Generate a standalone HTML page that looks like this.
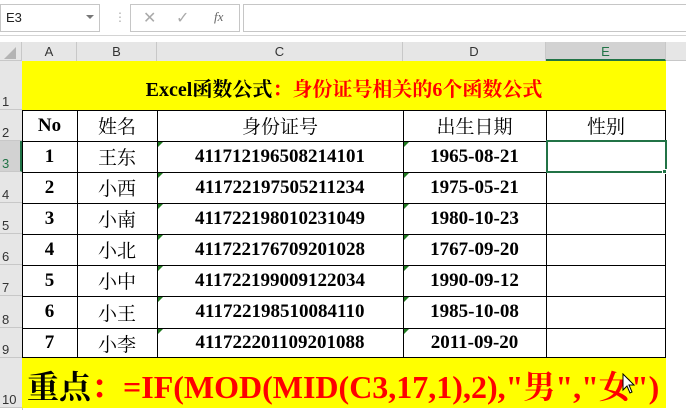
<!DOCTYPE html><html><head><meta charset="utf-8"><style>
*{margin:0;padding:0;box-sizing:border-box}
body{width:686px;height:410px;background:#fff;position:relative;overflow:hidden;font-family:"Liberation Sans",sans-serif}
.a{position:absolute}
.cell{position:absolute;display:flex;align-items:center;justify-content:center;font-family:"Liberation Serif","Noto Serif CJK SC",serif;font-weight:bold;font-size:19px;color:#000}
.rh{position:absolute;left:0;width:22px;background:#e6e6e6;border-bottom:1px solid #c8c8c8;font-size:13px;color:#333;padding-left:2px;display:flex;align-items:flex-end}
.ch{position:absolute;top:42px;height:19px;background:#e6e6e6;border-right:1px solid #c8c8c8;font-size:13px;color:#333;text-align:center;line-height:19px}
.tri{position:absolute;width:0;height:0;border-top:5px solid #207a20;border-right:5px solid transparent}
</style></head><body>
<div class="a" style="left:0;top:0;width:686px;height:36px;background:#fff;border-bottom:1px solid #d4d4d4"></div>
<div class="a" style="left:0;top:4px;width:100px;height:28px;border:1px solid #c6c6c6;font-size:13px;line-height:26px;padding-left:5px;color:#222">E3</div>
<div class="a" style="left:86px;top:15px;border-left:4px solid transparent;border-right:4px solid transparent;border-top:4px solid #777"></div>
<div class="a" style="left:114px;top:10px;color:#aaa;font-size:12px">⋮</div>
<div class="a" style="left:130px;top:4px;width:110px;height:28px;border:1px solid #c6c6c6"></div>
<div class="a" style="left:143px;top:8px;color:#aaa;font-size:16px">✕</div>
<div class="a" style="left:176px;top:8px;color:#aaa;font-size:16px">✓</div>
<div class="a" style="left:214px;top:9px;color:#666;font-size:13px;font-style:italic;font-family:'Liberation Serif',serif">fx</div>
<div class="a" style="left:243px;top:4px;width:443px;height:28px;border:1px solid #c6c6c6;border-right:none"></div>
<div class="a" style="left:0;top:42px;width:686px;height:19px;background:#e6e6e6;border-bottom:1px solid #c8c8c8"></div>
<div class="a" style="left:0;top:42px;width:22px;height:19px;border-right:1px solid #c8c8c8"></div>
<div class="a" style="left:4px;top:47px;border-left:12px solid transparent;border-bottom:12px solid #b4b4b4"></div>
<div class="ch" style="left:22px;width:55px">A</div>
<div class="ch" style="left:77px;width:80px">B</div>
<div class="ch" style="left:157px;width:246px">C</div>
<div class="ch" style="left:403px;width:143px">D</div>
<div class="ch" style="left:546px;width:120px;background:#d2d2d2;border-bottom:2px solid #217346;color:#217346">E</div>
<div class="rh" style="top:61px;height:49px">1</div>
<div class="rh" style="top:110px;height:31px">2</div>
<div class="rh" style="top:141px;height:31px;background:#d2d2d2;color:#217346;border-right:2px solid #217346">3</div>
<div class="rh" style="top:172px;height:31px">4</div>
<div class="rh" style="top:203px;height:31px">5</div>
<div class="rh" style="top:234px;height:31px">6</div>
<div class="rh" style="top:265px;height:31px">7</div>
<div class="rh" style="top:296px;height:32px">8</div>
<div class="rh" style="top:328px;height:30px">9</div>
<div class="rh" style="top:358px;height:50px">10</div>
<div class="a" style="left:22px;top:61px;width:1px;height:349px;background:#c8c8c8"></div>
<div class="a" style="left:22px;top:61px;width:644px;height:49px;background:#ff0;display:flex;align-items:center;justify-content:center;font-family:'Liberation Serif','Noto Serif CJK SC',serif;font-weight:bold;font-size:20px;padding-top:4px;white-space:nowrap"><span>Excel函数公式<span style="color:#f00">：身份证号相关的6个函数公式</span></span></div>
<div class="a" style="left:22px;top:110px;width:644px;height:248px;border:1px solid #000;border-right:none"></div>
<div class="a" style="left:665px;top:110px;width:1px;height:248px;background:#000"></div>
<div class="a" style="left:77px;top:110px;width:1px;height:248px;background:#000"></div>
<div class="a" style="left:157px;top:110px;width:1px;height:248px;background:#000"></div>
<div class="a" style="left:403px;top:110px;width:1px;height:248px;background:#000"></div>
<div class="a" style="left:546px;top:110px;width:1px;height:248px;background:#000"></div>
<div class="a" style="left:22px;top:141px;width:644px;height:1px;background:#000"></div>
<div class="a" style="left:22px;top:172px;width:644px;height:1px;background:#000"></div>
<div class="a" style="left:22px;top:203px;width:644px;height:1px;background:#000"></div>
<div class="a" style="left:22px;top:234px;width:644px;height:1px;background:#000"></div>
<div class="a" style="left:22px;top:265px;width:644px;height:1px;background:#000"></div>
<div class="a" style="left:22px;top:296px;width:644px;height:1px;background:#000"></div>
<div class="a" style="left:22px;top:328px;width:644px;height:1px;background:#000"></div>
<div class="a" style="left:22px;top:357px;width:644px;height:1px;background:#000"></div>
<div class="cell" style="left:22px;top:110px;width:55px;height:31px">No</div>
<div class="cell" style="left:77px;top:110px;width:80px;height:31px;font-weight:normal">姓名</div>
<div class="cell" style="left:157px;top:110px;width:246px;height:31px;font-weight:normal">身份证号</div>
<div class="cell" style="left:403px;top:110px;width:143px;height:31px;font-weight:normal">出生日期</div>
<div class="cell" style="left:546px;top:110px;width:120px;height:31px;font-weight:normal">性别</div>
<div class="cell" style="left:22px;top:141px;width:55px;height:31px">1</div><div class="cell" style="left:77px;top:141px;width:80px;height:31px;font-weight:normal">王东</div><div class="cell" style="left:157px;top:141px;width:246px;height:31px">411712196508214101</div><div class="cell" style="left:403px;top:141px;width:143px;height:31px">1965-08-21</div>
<div class="cell" style="left:22px;top:172px;width:55px;height:31px">2</div><div class="cell" style="left:77px;top:172px;width:80px;height:31px;font-weight:normal">小西</div><div class="cell" style="left:157px;top:172px;width:246px;height:31px">411722197505211234</div><div class="cell" style="left:403px;top:172px;width:143px;height:31px">1975-05-21</div>
<div class="cell" style="left:22px;top:203px;width:55px;height:31px">3</div><div class="cell" style="left:77px;top:203px;width:80px;height:31px;font-weight:normal">小南</div><div class="cell" style="left:157px;top:203px;width:246px;height:31px">411722198010231049</div><div class="cell" style="left:403px;top:203px;width:143px;height:31px">1980-10-23</div>
<div class="cell" style="left:22px;top:234px;width:55px;height:31px">4</div><div class="cell" style="left:77px;top:234px;width:80px;height:31px;font-weight:normal">小北</div><div class="cell" style="left:157px;top:234px;width:246px;height:31px">411722176709201028</div><div class="cell" style="left:403px;top:234px;width:143px;height:31px">1767-09-20</div>
<div class="cell" style="left:22px;top:265px;width:55px;height:31px">5</div><div class="cell" style="left:77px;top:265px;width:80px;height:31px;font-weight:normal">小中</div><div class="cell" style="left:157px;top:265px;width:246px;height:31px">411722199009122034</div><div class="cell" style="left:403px;top:265px;width:143px;height:31px">1990-09-12</div>
<div class="cell" style="left:22px;top:296px;width:55px;height:32px">6</div><div class="cell" style="left:77px;top:296px;width:80px;height:32px;font-weight:normal">小王</div><div class="cell" style="left:157px;top:296px;width:246px;height:32px">411722198510084110</div><div class="cell" style="left:403px;top:296px;width:143px;height:32px">1985-10-08</div>
<div class="cell" style="left:22px;top:328px;width:55px;height:30px">7</div><div class="cell" style="left:77px;top:328px;width:80px;height:30px;font-weight:normal">小李</div><div class="cell" style="left:157px;top:328px;width:246px;height:30px">411722201109201088</div><div class="cell" style="left:403px;top:328px;width:143px;height:30px">2011-09-20</div>
<div class="tri" style="left:158px;top:142px"></div><div class="tri" style="left:404px;top:142px"></div>
<div class="tri" style="left:158px;top:173px"></div><div class="tri" style="left:404px;top:173px"></div>
<div class="tri" style="left:158px;top:204px"></div><div class="tri" style="left:404px;top:204px"></div>
<div class="tri" style="left:158px;top:235px"></div><div class="tri" style="left:404px;top:235px"></div>
<div class="tri" style="left:158px;top:266px"></div><div class="tri" style="left:404px;top:266px"></div>
<div class="tri" style="left:158px;top:297px"></div><div class="tri" style="left:404px;top:297px"></div>
<div class="tri" style="left:158px;top:329px"></div><div class="tri" style="left:404px;top:329px"></div>
<div class="a" style="left:546px;top:140px;width:121px;height:33px;border:2px solid #217346"></div>
<div class="a" style="left:662px;top:169px;width:5px;height:5px;background:#217346;border:1px solid #fff"></div>
<div class="a" style="left:22px;top:358px;width:644px;height:50px;background:#ff0;display:flex;align-items:center;padding-left:5px;padding-top:4px;font-family:'Liberation Serif','Noto Serif CJK SC',serif;font-weight:bold;font-size:32px;white-space:nowrap"><span>重点<span style="color:#f00">：=IF(MOD(MID(C3,17,1),2),"男","女")</span></span></div>
<svg class="a" style="left:622px;top:373px" width="14" height="22" viewBox="0 0 14 22"><path d="M1 1 L1 17 L5 13 L8 20 L10 19 L7 12 L12 12 Z" fill="#fff" stroke="#000" stroke-width="1"/></svg>
</body></html>
